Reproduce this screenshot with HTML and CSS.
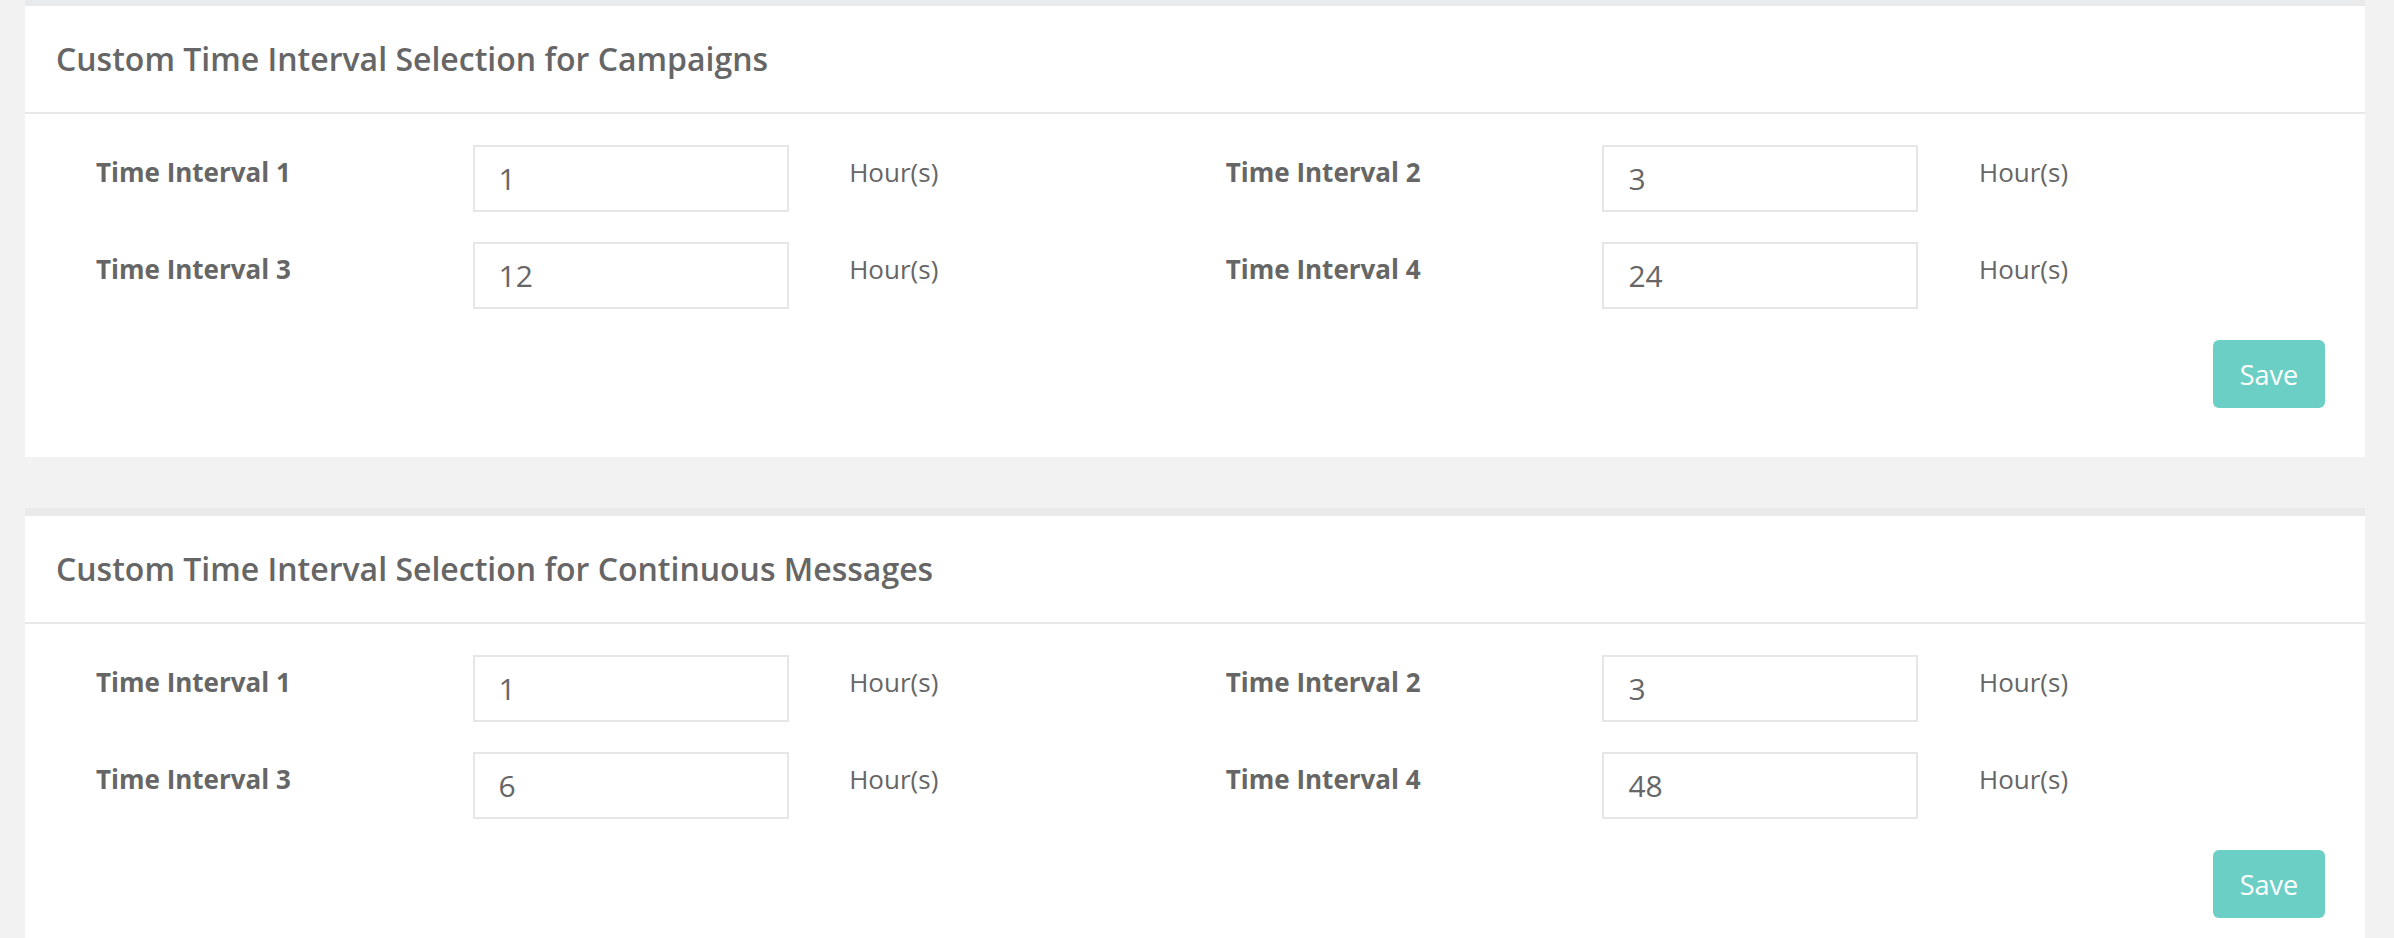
FILE: index.html
```html
<!DOCTYPE html>
<html lang="en">
<head>
  <meta charset="UTF-8">
  <meta name="viewport" content="width=device-width, initial-scale=1.0">
  <title>Custom Time Intervals</title>
  <link rel="stylesheet" href="styles.css">
</head>
<body>
  <div class="page">

    <!-- Campaigns -->
    <div class="card">
      <div class="card-header">
        <h2>Custom Time Interval Selection for Campaigns</h2>
      </div>
      <div class="card-body">
        <div class="interval-grid">
          <label class="field-label">Time Interval 1</label>
          <input class="field-input" type="text" value="1">
          <span class="unit">Hour(s)</span>
          <label class="field-label">Time Interval 2</label>
          <input class="field-input" type="text" value="3">
          <span class="unit">Hour(s)</span>

          <label class="field-label">Time Interval 3</label>
          <input class="field-input" type="text" value="12">
          <span class="unit">Hour(s)</span>
          <label class="field-label">Time Interval 4</label>
          <input class="field-input" type="text" value="24">
          <span class="unit">Hour(s)</span>
        </div>
        <div class="actions">
          <button class="btn-save">Save</button>
        </div>
      </div>
    </div>

    <!-- Continuous messages -->
    <div class="card">
      <div class="card-header">
        <h2>Custom Time Interval Selection for Continuous Messages</h2>
      </div>
      <div class="card-body">
        <div class="interval-grid">
          <label class="field-label">Time Interval 1</label>
          <input class="field-input" type="text" value="1">
          <span class="unit">Hour(s)</span>
          <label class="field-label">Time Interval 2</label>
          <input class="field-input" type="text" value="3">
          <span class="unit">Hour(s)</span>

          <label class="field-label">Time Interval 3</label>
          <input class="field-input" type="text" value="6">
          <span class="unit">Hour(s)</span>
          <label class="field-label">Time Interval 4</label>
          <input class="field-input" type="text" value="48">
          <span class="unit">Hour(s)</span>
        </div>
        <div class="actions">
          <button class="btn-save">Save</button>
        </div>
      </div>
    </div>

  </div>
</body>
</html>
```

FILE: styles.css
```css
* {
  box-sizing: border-box;
  margin: 0;
  padding: 0;
}

body {
  font-family: "Open Sans", "Noto Sans", sans-serif;
  background-color: #f2f2f2;
  color: #666;
  overflow: hidden;
}

.page {
  margin-top: -2px;
  padding: 0 29px 0 25px;
}

.card {
  background-color: #fff;
  border-top: 8px solid #e9eaeb;
  margin-bottom: 51px;
}

.card-header {
  padding: 33px 31px;
  border-bottom: 2px solid #e8e8e8;
}

.card-header h2 {
  font-size: 32px;
  font-weight: 600;
  line-height: 40px;
  color: #666;
}

.card-body {
  padding: 31px 40px 49px 71px;
}

.interval-grid {
  display: grid;
  grid-template-columns: repeat(6, 376.6px);
  grid-auto-rows: 67px;
  row-gap: 30px;
}

.field-label {
  font-size: 26px;
  font-weight: 700;
  line-height: 36px;
  padding-top: 9px;
  color: #666;
}

.field-input {
  width: 316px;
  height: 67px;
  border: 2px solid #e6e6e6;
  padding: 0 24px;
  font-family: inherit;
  font-size: 30px;
  color: #666;
  background-color: #fff;
  outline: none;
}

.unit {
  font-size: 26px;
  line-height: 36px;
  padding-top: 9px;
  color: #666;
}

.actions {
  display: flex;
  justify-content: flex-end;
  margin-top: 31px;
}

.btn-save {
  width: 112px;
  height: 68px;
  background-color: #6ccfc6;
  color: #fff;
  border: none;
  border-radius: 6px;
  font-family: inherit;
  font-size: 27px;
  cursor: pointer;
}

.btn-save:hover {
  background-color: #5bbfb6;
}
```
